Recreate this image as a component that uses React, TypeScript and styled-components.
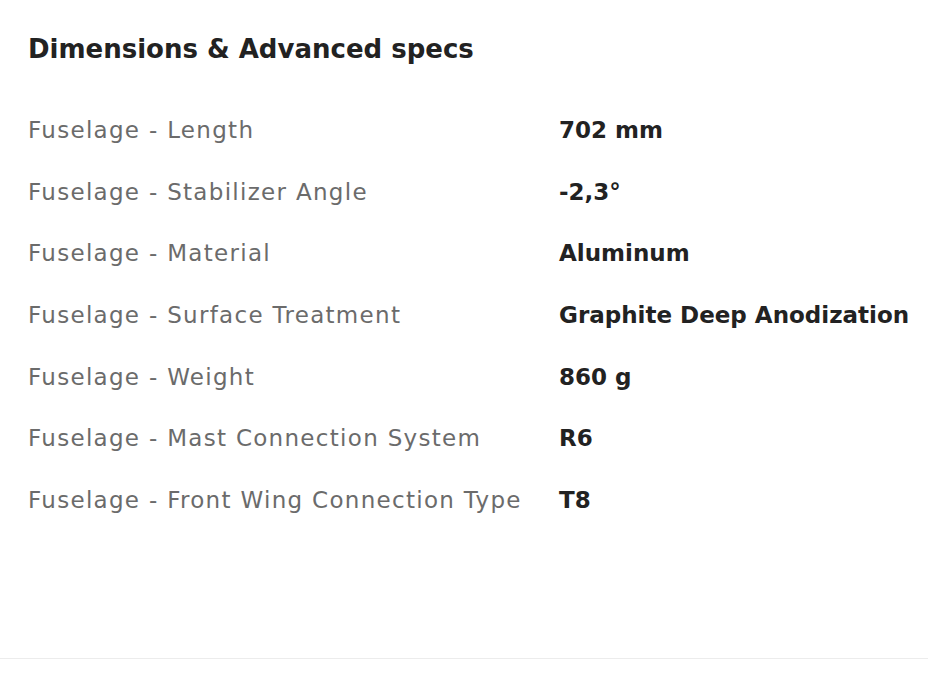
import React from "react";
import styled, { createGlobalStyle } from "styled-components";

const Global = createGlobalStyle`
  html, body { margin: 0; padding: 0; background: #ffffff; }
  body { font-family: "DejaVu Sans", "Open Sans", sans-serif; }
`;

const Page = styled.div`
  width: 928px;
  height: 673px;
  display: flex;
  flex-direction: column;
  box-sizing: border-box;
`;

const Section = styled.section`
  flex: 1;
  padding: 33px 0 0 28px;
  border-bottom: 1px solid #ececec;
  box-sizing: border-box;
`;

const Title = styled.h2`
  margin: 0;
  font-size: 26px;
  line-height: 32px;
  font-weight: 700;
  color: #222222;
`;

const Specs = styled.dl`
  margin: 51px 0 0;
  display: grid;
  grid-template-columns: 531px 1fr;
  grid-auto-rows: 61.67px;
`;

const Label = styled.dt`
  margin: 0;
  font-size: 23px;
  line-height: 28px;
  letter-spacing: 1.3px;
  color: #6b6b6b;
  white-space: nowrap;
`;

const Value = styled.dd`
  margin: 0;
  font-size: 23px;
  line-height: 28px;
  font-weight: 700;
  color: #222222;
  white-space: nowrap;
`;

const Footer = styled.div`
  height: 14px;
`;

const specs: [string, string][] = [
  ["Fuselage - Length", "702 mm"],
  ["Fuselage - Stabilizer Angle", "-2,3°"],
  ["Fuselage - Material", "Aluminum"],
  ["Fuselage - Surface Treatment", "Graphite Deep Anodization"],
  ["Fuselage - Weight", "860 g"],
  ["Fuselage - Mast Connection System", "R6"],
  ["Fuselage - Front Wing Connection Type", "T8"],
];

export default function App() {
  return (
    <Page>
      <Global />
      <Section>
        <Title>Dimensions &amp; Advanced specs</Title>
        <Specs>
          {specs.map(([k, v]) => (
            <React.Fragment key={k}>
              <Label>{k}</Label>
              <Value>{v}</Value>
            </React.Fragment>
          ))}
        </Specs>
      </Section>
      <Footer />
    </Page>
  );
}
